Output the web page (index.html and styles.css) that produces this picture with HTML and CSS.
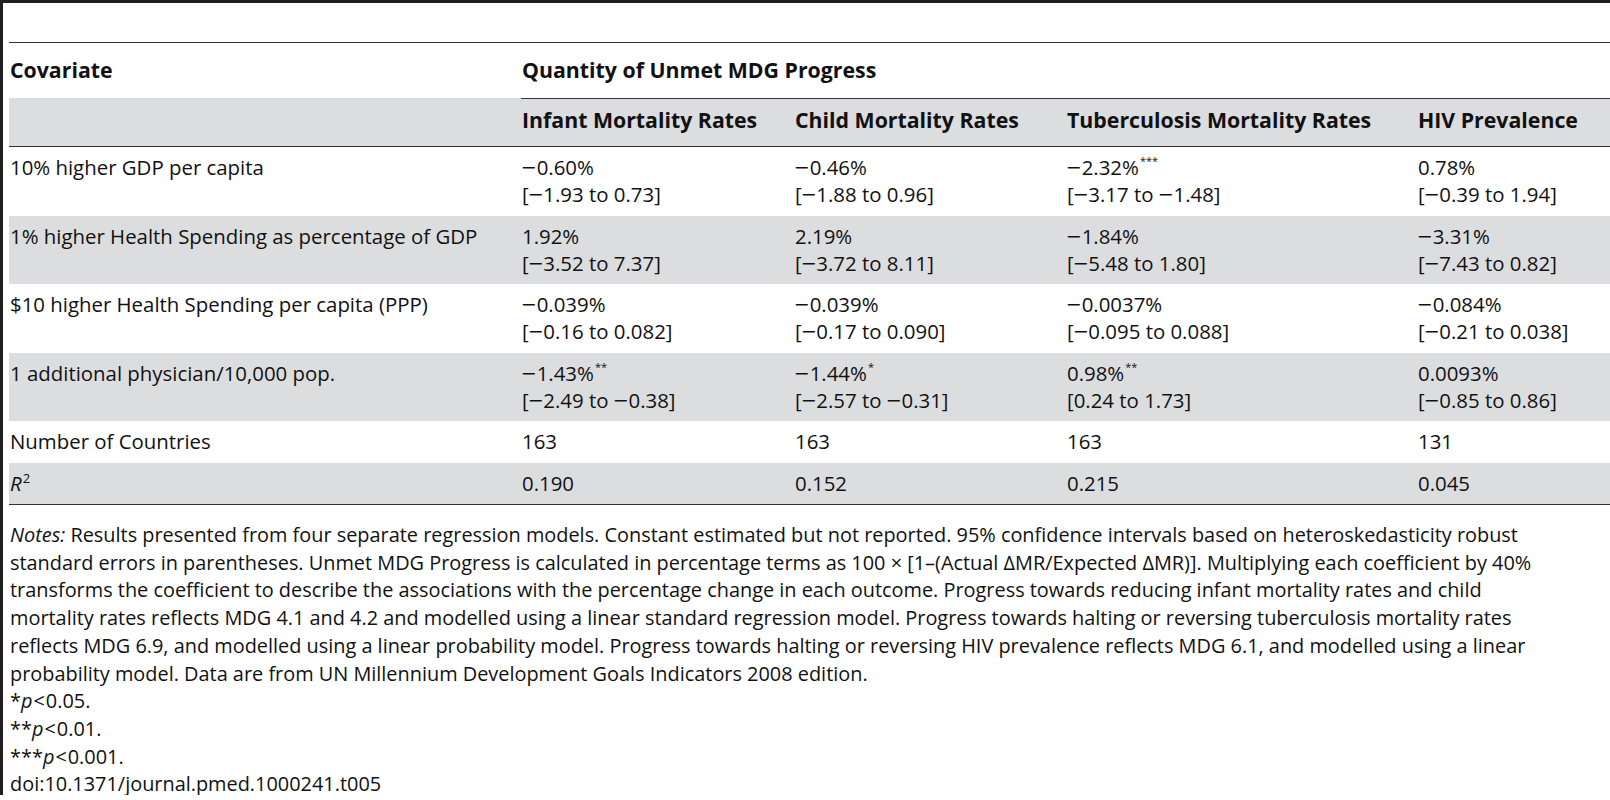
FILE: index.html
```html
<!DOCTYPE html>
<html lang="en">
<head>
    <meta charset="UTF-8">
    <title>Table 5 - Unmet MDG Progress</title>
    <link rel="stylesheet" href="styles.css">
</head>
<body>
    <div class="frame">
        <table class="results">
            <colgroup>
                <col class="c-cov">
                <col class="c-inf">
                <col class="c-child">
                <col class="c-tb">
                <col class="c-hiv">
            </colgroup>
            <thead>
                <tr class="head-top">
                    <th>Covariate</th>
                    <th colspan="4" class="span-head">Quantity of Unmet MDG Progress</th>
                </tr>
                <tr class="head-sub shade">
                    <th></th>
                    <th>Infant Mortality Rates</th>
                    <th>Child Mortality Rates</th>
                    <th>Tuberculosis Mortality Rates</th>
                    <th>HIV Prevalence</th>
                </tr>
            </thead>
            <tbody>
                <tr>
                    <td>10% higher GDP per capita</td>
                    <td><span class="neg">−</span>0.60%<br>[<span class="neg">−</span>1.93 to 0.73]</td>
                    <td><span class="neg">−</span>0.46%<br>[<span class="neg">−</span>1.88 to 0.96]</td>
                    <td><span class="neg">−</span>2.32%<sup>***</sup><br>[<span class="neg">−</span>3.17 to <span class="neg">−</span>1.48]</td>
                    <td>0.78%<br>[<span class="neg">−</span>0.39 to 1.94]</td>
                </tr>
                <tr class="shade">
                    <td>1% higher Health Spending as percentage of GDP</td>
                    <td>1.92%<br>[<span class="neg">−</span>3.52 to 7.37]</td>
                    <td>2.19%<br>[<span class="neg">−</span>3.72 to 8.11]</td>
                    <td><span class="neg">−</span>1.84%<br>[<span class="neg">−</span>5.48 to 1.80]</td>
                    <td><span class="neg">−</span>3.31%<br>[<span class="neg">−</span>7.43 to 0.82]</td>
                </tr>
                <tr>
                    <td>$10 higher Health Spending per capita (PPP)</td>
                    <td><span class="neg">−</span>0.039%<br>[<span class="neg">−</span>0.16 to 0.082]</td>
                    <td><span class="neg">−</span>0.039%<br>[<span class="neg">−</span>0.17 to 0.090]</td>
                    <td><span class="neg">−</span>0.0037%<br>[<span class="neg">−</span>0.095 to 0.088]</td>
                    <td><span class="neg">−</span>0.084%<br>[<span class="neg">−</span>0.21 to 0.038]</td>
                </tr>
                <tr class="shade">
                    <td>1 additional physician/10,000 pop.</td>
                    <td><span class="neg">−</span>1.43%<sup>**</sup><br>[<span class="neg">−</span>2.49 to <span class="neg">−</span>0.38]</td>
                    <td><span class="neg">−</span>1.44%<sup>*</sup><br>[<span class="neg">−</span>2.57 to <span class="neg">−</span>0.31]</td>
                    <td>0.98%<sup>**</sup><br>[0.24 to 1.73]</td>
                    <td>0.0093%<br>[<span class="neg">−</span>0.85 to 0.86]</td>
                </tr>
                <tr>
                    <td>Number of Countries</td>
                    <td>163</td>
                    <td>163</td>
                    <td>163</td>
                    <td>131</td>
                </tr>
                <tr class="shade last">
                    <td><i>R</i><sup class="sq">2</sup></td>
                    <td>0.190</td>
                    <td>0.152</td>
                    <td>0.215</td>
                    <td>0.045</td>
                </tr>
            </tbody>
        </table>

        <div class="notes">
            <i>Notes:</i> Results presented from four separate regression models. Constant estimated but not reported. 95% confidence intervals based on heteroskedasticity robust<br>
            standard errors in parentheses. Unmet MDG Progress is calculated in percentage terms as 100 × [1–(Actual ΔMR/Expected ΔMR)]. Multiplying each coefficient by 40%<br>
            transforms the coefficient to describe the associations with the percentage change in each outcome. Progress towards reducing infant mortality rates and child<br>
            mortality rates reflects MDG 4.1 and 4.2 and modelled using a linear standard regression model. Progress towards halting or reversing tuberculosis mortality rates<br>
            reflects MDG 6.9, and modelled using a linear probability model. Progress towards halting or reversing HIV prevalence reflects MDG 6.1, and modelled using a linear<br>
            probability model. Data are from UN Millennium Development Goals Indicators 2008 edition.<br>
            *<i>p</i><span class="lt">&lt;</span>0.05.<br>
            **<i>p</i><span class="lt">&lt;</span>0.01.<br>
            ***<i>p</i><span class="lt">&lt;</span>0.001.<br>
            doi:10.1371/journal.pmed.1000241.t005
        </div>
    </div>
</body>
</html>
```

FILE: styles.css
```css
body {
    margin: 0;
    background-color: white;
    color: #111;
    font-family: "Open Sans", Arial, sans-serif;
    font-size: 20.4px;
    overflow: hidden;
}
.frame {
    box-sizing: border-box;
    height: 795px;
    border-top: 3px solid #231f20;
    border-left: 3px solid #231f20;
    padding: 39px 0 0 6px;
}
.results {
    width: 1601px;
    table-layout: fixed;
    border-collapse: collapse;
    border-top: 1.5px solid #333;
    border-bottom: 1.5px solid #333;
}
.c-cov { width: 512px; }
.c-inf { width: 273px; }
.c-child { width: 272px; }
.c-tb { width: 351px; }
.c-hiv { width: 193px; }
th, td {
    text-align: left;
    vertical-align: top;
    padding: 7px 0 7.5px 1px;
    line-height: 27px;
    white-space: nowrap;
}
th {
    font-weight: bold;
    font-size: 21.3px;
}
.head-top th {
    padding-top: 13px;
    padding-bottom: 14.5px;
}
.span-head {
    border-bottom: 1.5px solid #333;
}
.head-sub th {
    padding-top: 7px;
    padding-bottom: 13.5px;
    border-bottom: 1.5px solid #333;
}
.shade {
    background-color: #dcdddf;
}
.neg {
    display: inline-block;
    transform: scaleX(1.25);
    margin: 0 2px 0 1px;
}
sup {
    font-size: 11px;
    line-height: 0;
    vertical-align: 10px;
    margin-left: 1px;
}
sup.sq {
    font-size: 13px;
    vertical-align: 8px;
}
.notes {
    margin-top: 16px;
    padding-left: 1px;
    font-size: 19.9px;
    line-height: 27.7px;
    white-space: nowrap;
}
.lt {
    margin: 0 1px;
}
```
